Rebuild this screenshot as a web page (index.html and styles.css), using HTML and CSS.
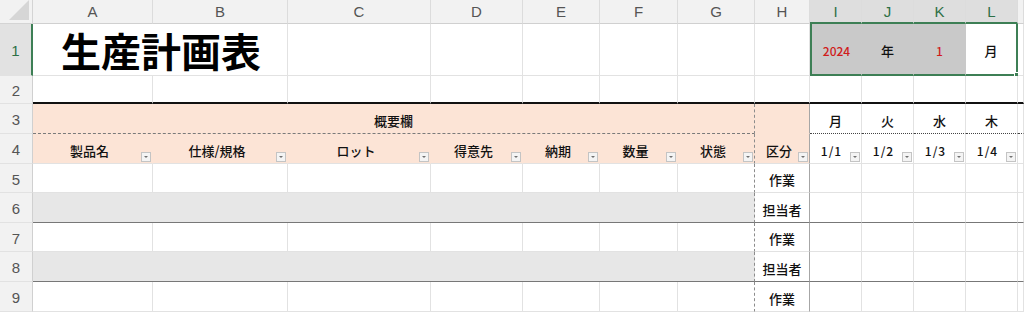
FILE: index.html
```html
<!DOCTYPE html>
<html lang="ja">
<head>
  <meta charset="UTF-8" />
  <title>生産計画表</title>
  <link rel="stylesheet" href="styles.css">
</head>
<body>
  <div class="sheet">
    <!-- 列見出し -->
    <div class="corner"></div>
    <div class="colh">A</div>
    <div class="colh">B</div>
    <div class="colh">C</div>
    <div class="colh">D</div>
    <div class="colh">E</div>
    <div class="colh">F</div>
    <div class="colh">G</div>
    <div class="colh">H</div>
    <div class="colh on">I</div>
    <div class="colh on">J</div>
    <div class="colh on">K</div>
    <div class="colh on">L</div>
    <div class="colh"></div>

    <!-- 1行目 -->
    <div class="rowh on">1</div>
    <div class="c title span2">生産計画表</div>
    <div class="c"></div>
    <div class="c"></div>
    <div class="c"></div>
    <div class="c"></div>
    <div class="c"></div>
    <div class="c"></div>
    <div class="c sel first fill red">2024</div>
    <div class="c sel fill">年</div>
    <div class="c sel fill red">1</div>
    <div class="c sel last">月<span class="handle"></span></div>
    <div class="c"></div>

    <!-- 2行目 -->
    <div class="rowh">2</div>
    <div class="c rule"></div>
    <div class="c rule"></div>
    <div class="c rule"></div>
    <div class="c rule"></div>
    <div class="c rule"></div>
    <div class="c rule"></div>
    <div class="c rule"></div>
    <div class="c rule"></div>
    <div class="c rule"></div>
    <div class="c rule"></div>
    <div class="c rule"></div>
    <div class="c rule"></div>
    <div class="c rule"></div>

    <!-- 3行目 -->
    <div class="rowh">3</div>
    <div class="c peach summary span7">概要欄</div>
    <div class="c peach kubun top"></div>
    <div class="c wd">月</div>
    <div class="c wd">火</div>
    <div class="c wd">水</div>
    <div class="c wd">木</div>
    <div class="c wd"></div>

    <!-- 4行目 -->
    <div class="rowh">4</div>
    <div class="c peach hd">製品名<span class="fb"></span></div>
    <div class="c peach hd">仕様/規格<span class="fb"></span></div>
    <div class="c peach hd">ロット<span class="fb"></span></div>
    <div class="c peach hd">得意先<span class="fb"></span></div>
    <div class="c peach hd">納期<span class="fb"></span></div>
    <div class="c peach hd">数量<span class="fb"></span></div>
    <div class="c peach hd g">状態<span class="fb"></span></div>
    <div class="c peach kubun hd">区分<span class="fb"></span></div>
    <div class="c hd date">1/1<span class="fb"></span></div>
    <div class="c hd date">1/2<span class="fb"></span></div>
    <div class="c hd date">1/3<span class="fb"></span></div>
    <div class="c hd date">1/4<span class="fb"></span></div>
    <div class="c"></div>

    <!-- 5行目 -->
    <div class="rowh">5</div>
    <div class="c"></div>
    <div class="c"></div>
    <div class="c"></div>
    <div class="c"></div>
    <div class="c"></div>
    <div class="c"></div>
    <div class="c g"></div>
    <div class="c kubun">作業</div>
    <div class="c"></div>
    <div class="c"></div>
    <div class="c"></div>
    <div class="c"></div>
    <div class="c"></div>

    <!-- 6行目 -->
    <div class="rowh">6</div>
    <div class="c shade span7 end"></div>
    <div class="c kubun end">担当者</div>
    <div class="c end"></div>
    <div class="c end"></div>
    <div class="c end"></div>
    <div class="c end"></div>
    <div class="c end"></div>

    <!-- 7行目 -->
    <div class="rowh">7</div>
    <div class="c"></div>
    <div class="c"></div>
    <div class="c"></div>
    <div class="c"></div>
    <div class="c"></div>
    <div class="c"></div>
    <div class="c g"></div>
    <div class="c kubun">作業</div>
    <div class="c"></div>
    <div class="c"></div>
    <div class="c"></div>
    <div class="c"></div>
    <div class="c"></div>

    <!-- 8行目 -->
    <div class="rowh">8</div>
    <div class="c shade span7 end"></div>
    <div class="c kubun end">担当者</div>
    <div class="c end"></div>
    <div class="c end"></div>
    <div class="c end"></div>
    <div class="c end"></div>
    <div class="c end"></div>

    <!-- 9行目 -->
    <div class="rowh">9</div>
    <div class="c"></div>
    <div class="c"></div>
    <div class="c"></div>
    <div class="c"></div>
    <div class="c"></div>
    <div class="c"></div>
    <div class="c g"></div>
    <div class="c kubun">作業</div>
    <div class="c"></div>
    <div class="c"></div>
    <div class="c"></div>
    <div class="c"></div>
    <div class="c"></div>
  </div>
</body>
</html>
```

FILE: styles.css
```css
* {
  box-sizing: border-box;
}
body {
  margin: 0;
  background: #fff;
  overflow: hidden;
  font-family: "Noto Sans CJK JP", "Noto Sans", sans-serif;
}
.sheet {
  display: grid;
  grid-template-columns: 33px 120px 135px 143px 92px 77px 78px 77px 55px 52px 52px 52px 52px 6px;
  grid-template-rows: 24px 52px 28px 30px 30px 29px 30px 29px 30px 30px;
  width: 1024px;
  height: 312px;
}
.corner {
  position: relative;
  background: #f2f2f2;
  border-right: 1px solid #d4d4d4;
  border-bottom: 1px solid #d4d4d4;
}
.corner::after {
  content: "";
  position: absolute;
  right: 3px;
  bottom: 3px;
  border-left: 20px solid transparent;
  border-bottom: 20px solid #d6d6d6;
}
.colh {
  display: flex;
  align-items: center;
  justify-content: center;
  background: #f2f2f2;
  border-right: 1px solid #dcdcdc;
  border-bottom: 1px solid #d0d0d0;
  font-family: "Liberation Sans", Arial, sans-serif;
  font-size: 15px;
  color: #555;
}
.colh.on {
  background: #dedede;
  color: #2e7046;
  border-bottom: 2px solid #3d7f55;
}
.rowh {
  display: flex;
  align-items: center;
  justify-content: center;
  background: #f2f2f2;
  border-right: 1px solid #d0d0d0;
  border-bottom: 1px solid #e2e2e2;
  font-family: "Liberation Sans", Arial, sans-serif;
  font-size: 15px;
  color: #555;
  padding-top: 2px;
}
.rowh.on {
  background: #e2e2e2;
  color: #2e7046;
  border-right: 2px solid #3d7f55;
}
.c {
  position: relative;
  display: flex;
  align-items: center;
  justify-content: center;
  background: #fff;
  border-right: 1px solid #e2e2e2;
  border-bottom: 1px solid #e2e2e2;
  font-size: 13px;
  font-weight: 500;
  color: #111;
  padding-top: 3px;
}
.span2 {
  grid-column: span 2;
}
.span7 {
  grid-column: span 7;
}
.title {
  justify-content: flex-start;
  padding: 0 0 0 28px;
  font-size: 40px;
  font-weight: 700;
  color: #000;
  white-space: nowrap;
}
.fill {
  background: #c9c9c9;
  border-right-color: #c9c9c9;
}
.red {
  color: #d01c1c;
  font-size: 12px;
}
.sel {
  border-bottom: 2px solid #3d7f55;
}
.sel.first {
  border-left: 2px solid #3d7f55;
}
.sel.last {
  border-right: 2px solid #3d7f55;
}
.handle {
  position: absolute;
  right: -4px;
  bottom: -4px;
  width: 6px;
  height: 6px;
  background: #3d7f55;
  border: 1px solid #fff;
}
.rule {
  border-bottom: 2px solid #111;
}
.peach {
  background: #fce4d6;
  border-right-color: #fce4d6;
}
.summary {
  border-right: 1px dashed #8c8c8c;
  border-bottom: 1px dashed #7a7a7a;
}
.kubun {
  border-right: 1px solid #a6a6a6;
}
.kubun.top {
  border-bottom-color: #fce4d6;
}
.g {
  border-right: 1px dashed #8c8c8c;
}
.wd {
  border-bottom: 1px dotted #444;
}
.hd {
  padding-right: 6px;
}
.date {
  font-size: 12px;
  letter-spacing: 1px;
  padding-right: 8px;
}
.fb {
  position: absolute;
  right: 1px;
  bottom: 1px;
  width: 10px;
  height: 10px;
  background: #f4f4f4;
  border: 1px solid #c4c4c4;
}
.fb::after {
  content: "";
  position: absolute;
  left: 2px;
  top: 3px;
  border-left: 2px solid transparent;
  border-right: 2px solid transparent;
  border-top: 2px solid #707070;
}
.shade {
  background: #e7e7e7;
  border-right: 1px dashed #8c8c8c;
}
.end {
  border-bottom: 1px solid #777;
}
```
